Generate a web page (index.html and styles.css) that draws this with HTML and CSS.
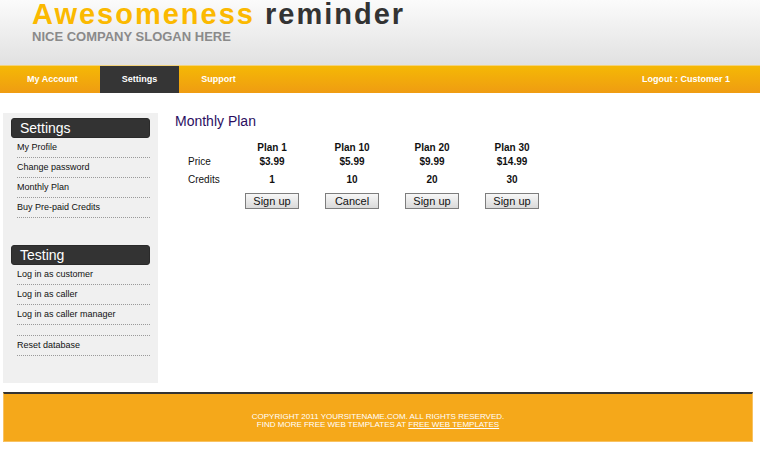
FILE: index.html
```html
<!DOCTYPE html>
<html>
<head>
<meta charset="utf-8">
<title>Awesomeness reminder</title>
<link rel="stylesheet" href="styles.css">
</head>
<body>
<div class="header">
  <h1 class="logo"><span class="logo-hi">Awesomeness</span> reminder</h1>
  <div class="slogan">NICE COMPANY SLOGAN HERE</div>
</div>
<div class="nav">
  <ul class="menu">
    <li><a href="#">My Account</a></li>
    <li class="active"><a href="#">Settings</a></li>
    <li><a href="#">Support</a></li>
  </ul>
  <a class="logout" href="#">Logout : Customer 1</a>
</div>
<div class="page">
  <div class="sidebar">
    <div class="side-box">
      <h2 class="side-title">Settings</h2>
      <ul class="side-list">
        <li>My Profile</li>
        <li>Change password</li>
        <li>Monthly Plan</li>
        <li>Buy Pre-paid Credits</li>
      </ul>
    </div>
    <div class="side-box">
      <h2 class="side-title">Testing</h2>
      <ul class="side-list">
        <li>Log in as customer</li>
        <li>Log in as caller</li>
        <li>Log in as caller manager</li>
        <li class="empty"></li>
        <li>Reset database</li>
      </ul>
    </div>
  </div>
  <div class="main">
    <h3 class="main-title">Monthly Plan</h3>
    <div class="plans">
      <div class="row head">
        <div class="label"></div>
        <div class="cell">Plan 1</div>
        <div class="cell">Plan 10</div>
        <div class="cell">Plan 20</div>
        <div class="cell">Plan 30</div>
      </div>
      <div class="row price">
        <div class="label">Price</div>
        <div class="cell">$3.99</div>
        <div class="cell">$5.99</div>
        <div class="cell">$9.99</div>
        <div class="cell">$14.99</div>
      </div>
      <div class="row credits">
        <div class="label">Credits</div>
        <div class="cell">1</div>
        <div class="cell">10</div>
        <div class="cell">20</div>
        <div class="cell">30</div>
      </div>
      <div class="row actions">
        <div class="label"></div>
        <div class="cell"><button class="btn">Sign up</button></div>
        <div class="cell"><button class="btn">Cancel</button></div>
        <div class="cell"><button class="btn">Sign up</button></div>
        <div class="cell"><button class="btn">Sign up</button></div>
      </div>
    </div>
  </div>
</div>
<div class="footer">
  <p class="foot-line">COPYRIGHT 2011 YOURSITENAME.COM. ALL RIGHTS RESERVED.</p>
  <p class="foot-line">FIND MORE FREE WEB TEMPLATES AT <a href="#">FREE WEB TEMPLATES</a></p>
</div>
</body>
</html>
```
FILE: styles.css
```css
html, body {
  margin: 0;
  padding: 0;
  background: #ffffff;
  font-family: "Liberation Sans", Arial, sans-serif;
}

.header {
  height: 65px;
  padding: 0 0 0 32px;
  box-sizing: border-box;
  background: linear-gradient(#fbfbfb, #e1e1e1);
}

.logo {
  margin: 0;
  font-size: 29px;
  line-height: 29px;
  font-weight: bold;
  letter-spacing: 2px;
  color: #333333;
}

.logo-hi {
  color: #fbb900;
}

.slogan {
  margin-top: 1px;
  font-size: 13px;
  line-height: 13px;
  font-weight: bold;
  color: #8a8a8a;
}

.nav {
  height: 28px;
  display: flex;
  justify-content: space-between;
  padding: 0 30px 0 5px;
  background: linear-gradient(#f5b805, #ef9c12);
  border-top: 1px solid #f3d27a;
  box-sizing: border-box;
}

.menu {
  display: flex;
  margin: 0;
  padding: 0;
  list-style: none;
}

.menu a,
.logout {
  display: block;
  padding: 0 22px;
  line-height: 27px;
  font-size: 9px;
  font-weight: bold;
  color: #ffffff;
  text-decoration: none;
}

.logout {
  padding: 0;
}

.menu .active a {
  background: #353535;
}

.page {
  display: flex;
  width: 750px;
  margin: 0 3px;
  padding-top: 20px;
}

.sidebar {
  width: 155px;
  height: 270px;
  box-sizing: border-box;
  padding: 5px 8px 0;
  background: #f0f0f0;
}

.side-box + .side-box {
  margin-top: 27px;
}

.side-title {
  margin: 0;
  height: 20px;
  padding-left: 8px;
  border-radius: 3px;
  border: 1px solid #2a2a2a;
  box-sizing: border-box;
  background: #333333;
  color: #ffffff;
  font-size: 14px;
  font-weight: normal;
  line-height: 18px;
}

.side-list {
  margin: 0 0 0 6px;
  padding: 0;
  list-style: none;
}

.side-list li {
  height: 19px;
  line-height: 19px;
  font-size: 9px;
  color: #111111;
  border-bottom: 1px dotted #9a9a9a;
}

.side-list li.empty {
  height: 10px;
}

.main {
  flex: 1;
  padding-left: 17px;
}

.main-title {
  margin: 0;
  font-size: 14px;
  line-height: 17px;
  font-weight: normal;
  color: #2b0e5f;
}

.plans {
  margin-top: 11px;
  padding-left: 13px;
  font-size: 10px;
  color: #111111;
}

.row {
  display: grid;
  grid-template-columns: 44px repeat(4, 80px);
}

.row .cell {
  text-align: center;
  font-weight: bold;
}

.head,
.price {
  line-height: 14px;
}

.credits {
  line-height: 22px;
}

.actions {
  padding-top: 2px;
}

.btn {
  width: 54px;
  height: 16px;
  padding: 0;
  border: 1px solid #7d7d7d;
  background: linear-gradient(#f7f7f7, #dadada);
  font-family: "Liberation Sans", Arial, sans-serif;
  font-size: 11px;
  line-height: 14px;
  color: #111111;
}

.footer {
  width: 750px;
  margin: 9px 3px 0;
  box-sizing: border-box;
  padding: 19px 0 12px;
  background: #f5a81a;
  border: 1px solid #f8c262;
  border-top: 2px solid #333333;
  text-align: center;
}

.foot-line {
  margin: 0;
  font-size: 8px;
  line-height: 8px;
  color: #ffffff;
}

.foot-line a {
  color: #ffffff;
}
```
